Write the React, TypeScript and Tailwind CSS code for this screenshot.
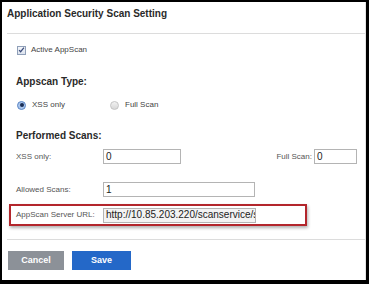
import React from "react";

const font = { fontFamily: '"Liberation Sans", Arial, sans-serif' };

function Checkbox() {
  return (
    <span className="flex h-[9px] w-[9px] items-center justify-center border border-[#8f9fb8] bg-gradient-to-b from-[#f4f6fa] to-[#dce3ee]">
      <svg width="8" height="8" viewBox="0 0 8 8">
        <path d="M1.2 4.2 L3 6 L6.8 1.4" fill="none" stroke="#3b4c7a" strokeWidth="1.4" />
      </svg>
    </span>
  );
}

function Radio({ on }: { on?: boolean }) {
  return on ? (
    <span className="flex h-[9px] w-[9px] items-center justify-center rounded-full border border-[#5d87c4] bg-[#a9c5ec]">
      <span className="h-[4px] w-[4px] rounded-full bg-[#1b2f55]" />
    </span>
  ) : (
    <span className="h-[9px] w-[9px] rounded-full border border-[#c4c4c4] bg-gradient-to-b from-[#f2f2f2] to-[#d7d7d7]" />
  );
}

function Field({ value, className }: { value: string; className?: string }) {
  return (
    <div
      className={
        "flex h-[15px] items-center overflow-hidden whitespace-nowrap border border-[#b4b4b4] pl-[2px] text-[10px] leading-none text-[#222] " +
        (className ?? "bg-white")
      }
    >
      {value}
    </div>
  );
}

export default function App() {
  return (
    <div className="h-[284px] w-[369px] bg-black pl-[2px] pt-[2px] pr-[3px] pb-[4px]" style={font}>
      <div className="flex h-full w-full flex-col border-r border-[#e4e4e4] bg-white">
        <h1 className="mt-[6px] pl-[5px] text-[10px] font-bold leading-[12px] text-[#2a2a2a]">
          Application Security Scan Setting
        </h1>
        <div className="mt-[13px] ml-[5px] h-px bg-[#dcdcdc]" />

        <div className="mt-[10px] flex h-[12px] items-center gap-[5px] pl-[15px]">
          <Checkbox />
          <span className="text-[8px] text-[#444]">Active AppScan</span>
        </div>

        <h2 className="mt-[20px] pl-[14px] text-[10px] font-bold leading-[12px] text-[#2a2a2a]">Appscan Type:</h2>
        <div className="mt-[11px] flex h-[12px] items-center pl-[15px] text-[8px] text-[#444]">
          <div className="flex w-[93px] items-center gap-[6px]">
            <Radio on />
            <span>XSS only</span>
          </div>
          <div className="flex items-center gap-[6px]">
            <Radio />
            <span>Full Scan</span>
          </div>
        </div>

        <h2 className="mt-[19px] pl-[14px] text-[10px] font-bold leading-[12px] text-[#2a2a2a]">Performed Scans:</h2>
        <div className="mt-[7px] flex items-center pl-[14px] text-[8px] text-[#555]">
          <span className="w-[87px]">XSS only:</span>
          <Field value="0" className="w-[78px] bg-white" />
          <span className="ml-auto mr-[2px]">Full Scan:</span>
          <Field value="0" className="mr-[8px] w-[43px] bg-white" />
        </div>

        <div className="mt-[18px] flex items-center pl-[14px] text-[8px] text-[#555]">
          <span className="w-[87px]">Allowed Scans:</span>
          <Field value="1" className="w-[152px] bg-white" />
        </div>

        <div className="mt-[7px] ml-[7px] flex h-[22px] w-[298px] items-center border-2 border-[#b3262c] pl-[5px] text-[8px] text-[#555] shadow-[1px_2px_3px_rgba(0,0,0,0.3)]">
          <span className="w-[87px]">AppScan Server URL:</span>
          <Field value="http://10.85.203.220/scanservice/se" className="w-[153px] bg-[#f3f3f3]" />
        </div>

        <div className="mt-[13px] ml-[5px] h-px bg-[#dcdcdc]" />

        <div className="mt-[11px] flex gap-[8px] pl-[6px]">
          <button className="flex h-[19px] w-[56px] items-center justify-center bg-[#8c9198] text-[9px] font-bold text-white">
            Cancel
          </button>
          <button className="flex h-[19px] w-[59px] items-center justify-center bg-[#2468c8] text-[9px] font-bold text-white">
            Save
          </button>
        </div>
      </div>
    </div>
  );
}
